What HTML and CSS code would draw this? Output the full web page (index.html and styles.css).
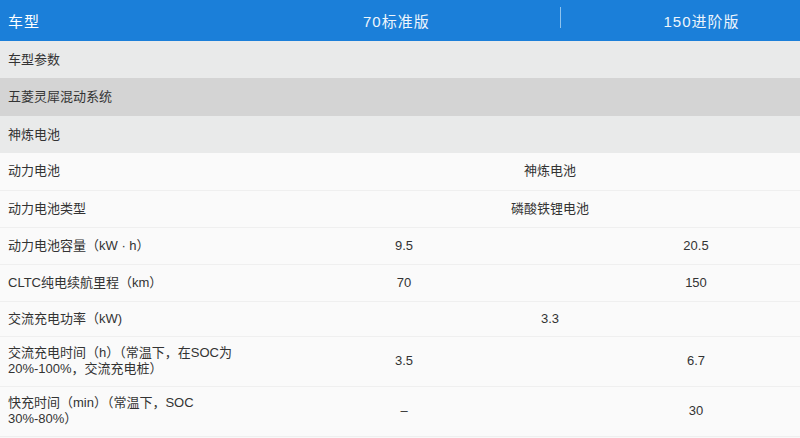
FILE: index.html
```html
<!DOCTYPE html>
<html lang="zh-CN">
<head>
<meta charset="utf-8">
<title>车型参数</title>
<link rel="stylesheet" href="styles.css">
</head>
<body>
<div class="page">
  <div class="head">
    <div class="head-label">车型</div>
    <div class="head-col head-c1">70标准版</div>
    <div class="head-divider"></div>
    <div class="head-col head-c2">150进阶版</div>
  </div>
  <table class="spec">
    <colgroup>
      <col class="c-label">
      <col class="c-val">
      <col class="c-val">
    </colgroup>
    <tbody>
      <tr class="sec sec-light"><td colspan="3">车型参数</td></tr>
      <tr class="sec sec-dark"><td colspan="3">五菱灵犀混动系统</td></tr>
      <tr class="sec sec-light"><td colspan="3">神炼电池</td></tr>
      <tr class="row"><td class="lbl">动力电池</td><td class="val" colspan="2">神炼电池</td></tr>
      <tr class="row"><td class="lbl">动力电池类型</td><td class="val" colspan="2">磷酸铁锂电池</td></tr>
      <tr class="row"><td class="lbl">动力电池容量（kW · h）</td><td class="val">9.5</td><td class="val">20.5</td></tr>
      <tr class="row"><td class="lbl">CLTC纯电续航里程（km）</td><td class="val">70</td><td class="val">150</td></tr>
      <tr class="row row-short"><td class="lbl">交流充电功率（kW)</td><td class="val" colspan="2">3.3</td></tr>
      <tr class="row row-tall"><td class="lbl">交流充电时间（h）（常温下，在SOC为<br>20%-100%，交流充电桩）</td><td class="val">3.5</td><td class="val">6.7</td></tr>
      <tr class="row row-tall"><td class="lbl">快充时间（min）（常温下，SOC<br>30%-80%）</td><td class="val">–</td><td class="val">30</td></tr>
    </tbody>
  </table>
</div>
</body>
</html>
```

FILE: styles.css
```css
html, body {
  margin: 0;
  padding: 0;
  background: #f8f8f8;
}
body {
  width: 800px;
  height: 438px;
  overflow: hidden;
  font-family: "Liberation Sans", "Noto Sans CJK SC", sans-serif;
  color: #333333;
}
.page {
  width: 842px;
}
.head {
  display: flex;
  height: 41px;
  align-items: center;
  background: #1b7fd9;
  color: #eef5fc;
  font-size: 15px;
  letter-spacing: 1px;
}
.head-label {
  width: 227px;
  padding-left: 8px;
  color: #ffffff;
}
.head-col {
  text-align: center;
}
.head-c1 {
  width: 331px;
}
.head-divider {
  width: 1px;
  height: 21px;
  align-self: flex-start;
  margin-top: 7px;
  background: #8fc3ee;
}
.head-c2 {
  width: 284px;
}
.spec {
  width: 842px;
  table-layout: fixed;
  border-collapse: collapse;
  font-size: 13px;
  line-height: 16px;
}
.c-label {
  width: 258px;
}
.c-val {
  width: 292px;
}
.spec td {
  padding: 0 8px;
  vertical-align: middle;
}
.sec td {
  height: 37px;
  box-sizing: border-box;
}
.sec-light td {
  background: #e9eaea;
}
.sec-dark td {
  background: #d4d4d4;
  height: 38px;
}
.row td {
  height: 37px;
  box-sizing: border-box;
  background: #fafafa;
  border-bottom: 1px solid #efefef;
}
.row-short td {
  height: 35px;
}
.row-tall td {
  height: 50px;
}
.lbl {
  text-align: left;
}
.val {
  text-align: center;
}
```
